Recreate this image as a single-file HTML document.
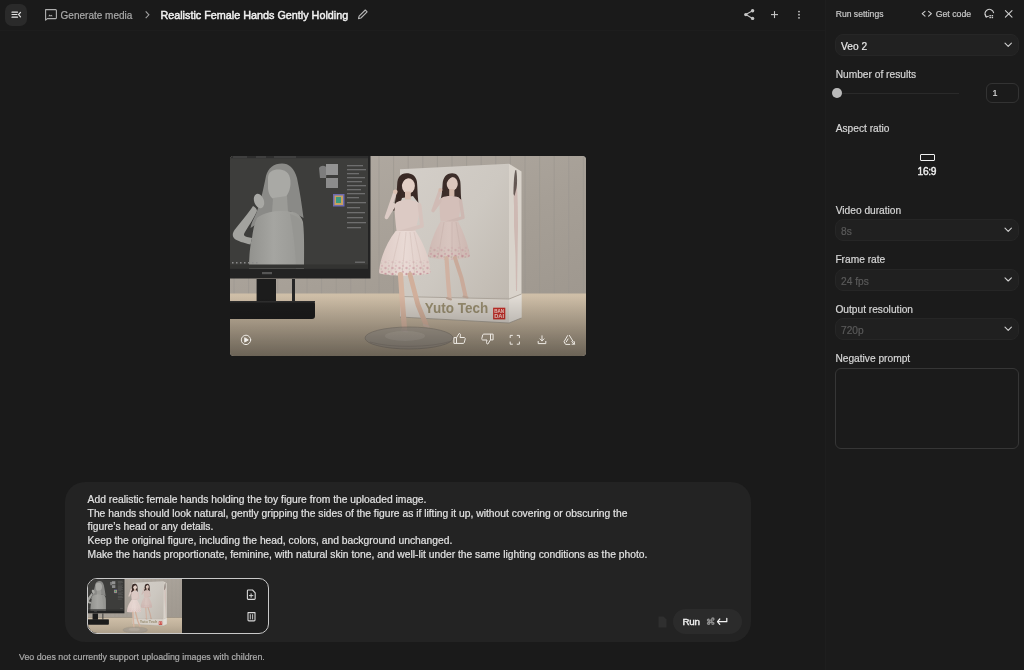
<!DOCTYPE html>
<html><head><meta charset="utf-8">
<style>
*{box-sizing:border-box;margin:0;padding:0}
html,body{width:1024px;height:670px;overflow:hidden;background:#1a1a1a;-webkit-font-smoothing:antialiased;font-family:"Liberation Sans",sans-serif;color:#e3e3e3}
.abs{position:absolute}
.t{position:absolute;white-space:pre;line-height:1}
#root{position:absolute;left:0;top:0;width:1024px;height:670px;will-change:transform;-webkit-text-stroke:0.2px currentColor}
svg{position:absolute;overflow:visible}
#panel{position:absolute;left:825px;top:0;width:199px;height:670px;background:#1b1b1b;border-left:1px solid #1e1e1e}
#hdrline{position:absolute;left:0;top:30px;width:825px;height:1px;background:#1d1d1d}
.lbl{font-size:10.2px;color:#d6d6d6}
.dd{position:absolute;left:835px;width:184px;height:22px;border-radius:8px;background:#202020;border:1px solid #262626}
.dd .v{position:absolute;left:5px;top:6px;font-size:10.2px;color:#5a5a5a;white-space:pre}
</style></head><body><div id="root">

<div id="hdrline"></div>
<!-- header left -->
<div class="abs" style="left:5px;top:4px;width:22px;height:22px;border-radius:7px;background:#2a2a2a"></div>
<svg style="left:0;top:0" width="40" height="30">
  <g stroke="#e6e6e6" stroke-width="1.2" fill="none" stroke-linecap="round">
    <line x1="12" y1="12.2" x2="17.5" y2="12.2"/>
    <line x1="12" y1="14.5" x2="17" y2="14.5"/>
    <line x1="12" y1="17.2" x2="17.5" y2="17.2"/>
    <polyline points="20.5,12.4 18.6,14.6 20.5,16.8"/>
  </g>
</svg>
<svg style="left:0;top:0" width="60" height="30">
  <path d="M45.6,9.6 h10 a0.8,0.8 0 0 1 0.8,0.8 v7.4 a0.8,0.8 0 0 1 -0.8,0.8 h-8.2 l-1.8,1.6 z" fill="none" stroke="#b0b0b0" stroke-width="1.1" stroke-linejoin="round"/>
  <path d="M48.3,16.2 l1.3,-1.6 l0.9,1 l0.8,-0.9 l1.5,1.5 z" fill="#b0b0b0"/>
</svg>
<div class="t" style="left:60.6px;top:11px;font-size:10px;color:#a9a9a9">Generate media</div>
<svg style="left:0;top:0" width="160" height="30">
  <polyline points="145.7,11.4 148.9,14.8 145.7,18.2" fill="none" stroke="#a0a0a0" stroke-width="1.1"/>
</svg>
<div class="t" style="left:160.4px;top:9.6px;font-size:10.8px;font-weight:400;-webkit-text-stroke:0.45px #f2f2f2;color:#f2f2f2">Realistic Female Hands Gently Holding</div>
<svg style="left:0;top:0" width="380" height="30">
  <path d="M358.5,18.6 l0.6,-2.4 l6.2,-6.2 l1.8,1.8 l-6.2,6.2 z" fill="none" stroke="#b5b5b5" stroke-width="1.1" stroke-linejoin="round"/>
</svg>
<!-- header right icons -->
<svg style="left:0;top:0" width="820" height="30">
  <g fill="#c6c6c6">
    <circle cx="745.8" cy="14.6" r="1.7"/><circle cx="752.6" cy="10.8" r="1.7"/><circle cx="752.6" cy="18.4" r="1.7"/>
  </g>
  <g stroke="#c6c6c6" stroke-width="1.1" fill="none">
    <line x1="745.8" y1="14.6" x2="752.6" y2="10.8"/><line x1="745.8" y1="14.6" x2="752.6" y2="18.4"/>
    <line x1="771" y1="14.6" x2="778" y2="14.6"/><line x1="774.5" y1="11.1" x2="774.5" y2="18.1"/>
  </g>
  <g fill="#c6c6c6">
    <circle cx="799" cy="11.6" r="0.9"/><circle cx="799" cy="14.7" r="0.9"/><circle cx="799" cy="17.8" r="0.9"/>
  </g>
</svg>

<!-- video player -->
<div id="video" class="abs" style="left:230px;top:156px;width:356px;height:200px;border-radius:4px;overflow:hidden;background:#b4afa9">
<svg style="left:0;top:0" width="356" height="200" viewBox="0 0 356 200">
<defs>
  <linearGradient id="wall" x1="0" y1="0" x2="1" y2="1"><stop offset="0" stop-color="#b3aca4"/><stop offset="0.6" stop-color="#a69f96"/><stop offset="1" stop-color="#9f988f"/></linearGradient>
  <linearGradient id="floor" x1="0" y1="0" x2="0" y2="1"><stop offset="0" stop-color="#cfbfa8"/><stop offset="0.45" stop-color="#c0b19b"/><stop offset="1" stop-color="#a89b87"/></linearGradient>
  <linearGradient id="ov" x1="0" y1="0" x2="0" y2="1"><stop offset="0" stop-color="#000" stop-opacity="0"/><stop offset="1" stop-color="#000" stop-opacity="0.36"/></linearGradient>
  <linearGradient id="boxf" x1="0" y1="0" x2="1" y2="1"><stop offset="0" stop-color="#d4cfc9"/><stop offset="0.5" stop-color="#cdc8c1"/><stop offset="1" stop-color="#bdb6ad"/></linearGradient>
  <linearGradient id="skirt" x1="0" y1="0" x2="1" y2="0"><stop offset="0" stop-color="#dcc9c3"/><stop offset="0.5" stop-color="#e9dad5"/><stop offset="1" stop-color="#dccac4"/></linearGradient>
  <linearGradient id="skirt2" x1="0" y1="0" x2="1" y2="0"><stop offset="0" stop-color="#cdb8b2"/><stop offset="0.5" stop-color="#d8c5bf"/><stop offset="1" stop-color="#cbb5af"/></linearGradient>
  <linearGradient id="torso" x1="0" y1="0" x2="1" y2="0"><stop offset="0" stop-color="#92928e"/><stop offset="0.45" stop-color="#a5a5a1"/><stop offset="1" stop-color="#979793"/></linearGradient>
  <radialGradient id="disc" cx="0.5" cy="0.5" r="0.5"><stop offset="0" stop-color="#aaa399"/><stop offset="0.85" stop-color="#a19a90"/><stop offset="1" stop-color="#8e877e"/></radialGradient>
</defs>
<g id="scene">
<rect x="0" y="0" width="356" height="138" fill="url(#wall)"/>
<g stroke="#9a958f" stroke-width="1" opacity="0.6">
<line x1="149.0" y1="0" x2="149.0" y2="138"/>
<line x1="163.6" y1="0" x2="163.6" y2="138"/>
<line x1="178.2" y1="0" x2="178.2" y2="138"/>
<line x1="192.8" y1="0" x2="192.8" y2="138"/>
<line x1="207.4" y1="0" x2="207.4" y2="138"/>
<line x1="222.0" y1="0" x2="222.0" y2="138"/>
<line x1="236.6" y1="0" x2="236.6" y2="138"/>
<line x1="251.2" y1="0" x2="251.2" y2="138"/>
<line x1="265.8" y1="0" x2="265.8" y2="138"/>
<line x1="280.4" y1="0" x2="280.4" y2="138"/>
<line x1="295.0" y1="0" x2="295.0" y2="138"/>
<line x1="309.6" y1="0" x2="309.6" y2="138"/>
<line x1="324.2" y1="0" x2="324.2" y2="138"/>
<line x1="338.8" y1="0" x2="338.8" y2="138"/>
<line x1="353.4" y1="0" x2="353.4" y2="138"/>
<line x1="4.0" y1="122" x2="4.0" y2="138"/>
<line x1="18.6" y1="122" x2="18.6" y2="138"/>
<line x1="33.2" y1="122" x2="33.2" y2="138"/>
<line x1="47.8" y1="122" x2="47.8" y2="138"/>
<line x1="62.4" y1="122" x2="62.4" y2="138"/>
<line x1="77.0" y1="122" x2="77.0" y2="138"/>
<line x1="91.6" y1="122" x2="91.6" y2="138"/>
<line x1="106.2" y1="122" x2="106.2" y2="138"/>
<line x1="120.8" y1="122" x2="120.8" y2="138"/>
<line x1="135.4" y1="122" x2="135.4" y2="138"/>
</g>
<rect x="0" y="137.5" width="356" height="62.5" fill="url(#floor)"/>
<!-- monitor -->
<rect x="-2" y="-2" width="142.5" height="124.5" fill="#232323"/>
<rect x="0" y="0" width="138" height="112.5" fill="#3d3d3b"/>
<rect x="0" y="0" width="138" height="2.2" fill="#2e2e2e"/>
<g fill="#5a5a5a"><rect x="3" y="0.6" width="14" height="0.8"/><rect x="26" y="0.6" width="10" height="0.8"/><rect x="44" y="0.6" width="22" height="0.8"/></g>
<!-- sculpture -->
<path d="M52,7.5 C44,7.5 38,12 36,20 C34,30 31,45 26,58 C23,64 21,68 20.5,72 L30,66 L44,56 L60,55 L70,60 L73.5,62 C72,50 70,36 67,22 C64,12 59,7.5 52,7.5 Z" fill="#8a8a87"/>
<path d="M38,22 C38,15 44,13 50,13.5 C57,14 61,19 60.5,28 C60,36 56,44 49,44.5 C42,45 37.5,38 38,30 Z" fill="#a9a9a5"/>
<path d="M43,42 L57,40 L58,56 L42,57 Z" fill="#9b9b97"/>
<path d="M27,62 C34,56 46,54.5 57,55 C66,55.5 71,59 73,66 C74.5,80 74,95 74,112.5 L19,112.5 C19,100 20,90 22,82 C23,74 24.5,67 27,62 Z" fill="url(#torso)"/>
<path d="M60,58 C68,60 72,64 73,72 L74,112.5 L66,112.5 C66,100 64,80 60,58 Z" fill="#959591" opacity="0.8"/>
<path d="M20.5,88.5 C14,87 7,85 4.3,82.5 C2,80 2.5,77 4.5,74 C10,67 16,60 21,53 L23,50 C25,51 27,53 27,55 C25,60 20,68 15,76 C13,79 14,80 17,81 L22,82 Z" fill="#a2a29e"/>
<ellipse cx="29" cy="45" rx="4.8" ry="7.5" transform="rotate(-20 29 45)" fill="#a8a8a4"/>
<rect x="0" y="108.5" width="138" height="4" fill="#333331"/>
<!-- zbrush ui -->
<g>
  <path d="M89,12 c2,-3 6,-3 8,0 l-1,10 h-6 z" fill="#7d7d7d"/>
  <rect x="96" y="8" width="12" height="11" fill="#939393"/>
  <rect x="96" y="22" width="12" height="10" fill="#8c8c8c"/>
  <rect x="103" y="38" width="11.5" height="12.5" fill="#6d6ab0"/>
  <rect x="104.5" y="39.5" width="8.5" height="9.5" fill="#c8a060"/>
  <rect x="106" y="41" width="5" height="6" fill="#3a9a80"/>
  <g fill="#6e6e6e">
    <rect x="117" y="9" width="16" height="1.3"/><rect x="117" y="13" width="19" height="1.3"/><rect x="117" y="17" width="12" height="1.3"/>
    <rect x="117" y="21" width="18" height="1.3"/><rect x="117" y="25" width="15" height="1.3"/><rect x="117" y="29" width="19" height="1.3"/>
    <rect x="117" y="33" width="14" height="1.3"/><rect x="117" y="37" width="18" height="1.3"/><rect x="117" y="41" width="12" height="1.3"/>
    <rect x="117" y="46" width="19" height="1.3"/><rect x="117" y="51" width="13" height="1.3"/><rect x="117" y="56" width="18" height="1.3"/>
    <rect x="117" y="61" width="16" height="1.3"/><rect x="117" y="66" width="19" height="1.3"/><rect x="117" y="71" width="14" height="1.3"/>
  </g>
  <g fill="#8a8a8a"><rect x="2" y="106" width="1.5" height="1.5"/><rect x="6" y="106" width="1.5" height="1.5"/><rect x="10" y="106" width="1.5" height="1.5"/><rect x="14" y="106" width="1.5" height="1.5"/><rect x="18" y="106" width="1.5" height="1.5"/><rect x="22" y="106" width="1.5" height="1.5"/><rect x="26" y="106" width="1.5" height="1.5"/></g>
  <rect x="125" y="105.5" width="10" height="1.5" fill="#666"/>
  <rect x="32" y="116" width="10" height="2.2" fill="#555"/>
</g>
<!-- stand -->
<rect x="26.6" y="123" width="19.4" height="23" fill="#1c1c1c"/>
<rect x="62" y="123" width="3" height="22" fill="#262626"/>
<path d="M-1,145 L82,145 C84,145 85,146 85,148 L85,160 C85,162 84,163 82,163 L-1,163 Z" fill="#1b1b1b"/>
<rect x="0" y="145" width="85" height="1.6" fill="#2e2e2e"/>
<!-- box -->
<path d="M170,13.3 L279,7.8 L279,167 L170,161 Z" fill="url(#boxf)"/>
<path d="M279,7.8 L291.5,15.4 L291.5,162 L279,167 Z" fill="#d9d3cb"/>
<path d="M170,140.5 L279,143 L279,167 L170,161 Z" fill="#d6d0c8"/>
<path d="M279,143 L291.5,138 L291.5,162 L279,167 Z" fill="#e2ddd6"/>
<path d="M170,140.5 L279,143 L291.5,138" fill="none" stroke="#a9a197" stroke-width="0.9"/>
<path d="M170,161 L279,167 L291.5,162" fill="none" stroke="#9d958a" stroke-width="0.8"/>
<text x="194.8" y="156.6" font-family="Liberation Sans" font-weight="700" font-size="15.2" fill="#968b6e" textLength="63.4" lengthAdjust="spacingAndGlyphs">Yuto Tech</text>
<rect x="263.1" y="151.7" width="12.2" height="11.7" fill="#c22d27"/>
<text x="264.2" y="156.8" font-family="Liberation Sans" font-weight="700" font-size="5" fill="#f3d0c8" textLength="10" lengthAdjust="spacingAndGlyphs">BAN</text>
<text x="264.2" y="161.8" font-family="Liberation Sans" font-weight="700" font-size="5" fill="#f3d0c8" textLength="10" lengthAdjust="spacingAndGlyphs">DAI</text>
<!-- box side figure -->
<path d="M284.5,26 C283.5,32 283.5,40 284,50 L284,70 L285.5,100 L286,135 L287,135 L287.5,100 L288,70 C288,50 287.5,35 286.5,26 Z" fill="#c9aea8" opacity="0.7"/>
<path d="M285.5,14 C284,18 283.5,28 283.5,38 L284.5,40 L286.5,32 C287.5,26 287,18 286.2,14 Z" fill="#4a3e3a" opacity="0.8"/>
<!-- figure 2 -->
<defs>
  <clipPath id="sk2"><path d="M210.5,65.6 L228,65.6 C233,75 238,88 239.6,98 C239.8,100 239.5,101 238.5,101.5 C226,104 210,104 199.3,101.5 C198.3,101 198,100 198.2,98 C200,88 205,75 210.5,65.6 Z"/></clipPath>
  <clipPath id="sk1"><path d="M165.7,75 L185.5,75 C193,86 199,100 200.2,113 C200.8,115 200.5,117 199.8,117.5 C186,120.5 162,120.5 149.6,117.5 C149,117 149,115 149.4,113 C151,100 157,86 165.7,75 Z"/></clipPath>
  <pattern id="flor" width="7" height="6" patternUnits="userSpaceOnUse">
    <circle cx="1.5" cy="4" r="1.2" fill="#bb7f8a" opacity="0.85"/><circle cx="5" cy="1.8" r="1.1" fill="#c48f98" opacity="0.8"/><circle cx="4.2" cy="5" r="0.7" fill="#8f9a80" opacity="0.6"/>
  </pattern>
  <linearGradient id="band" x1="0" y1="0" x2="0" y2="1"><stop offset="0" stop-color="#fff" stop-opacity="0.15"/><stop offset="1" stop-color="#fff" stop-opacity="1"/></linearGradient>
  <mask id="bandm1"><rect x="140" y="104" width="70" height="18" fill="url(#band)"/></mask>
  <mask id="bandm2"><rect x="190" y="90" width="60" height="14" fill="url(#band)"/></mask>
</defs>
<g>
  <path d="M222.2,17.3 C216,17.3 213,22 212.6,28 C212.3,35 211.5,42 209.5,48 L213.5,48 L216,42 L228,41 L231.5,45 C230.5,38 231,30 230.2,25 C228.8,20 226.5,17.3 222.2,17.3 Z" fill="#3d2e2a"/>
  <ellipse cx="222.2" cy="27.8" rx="5.6" ry="6.8" fill="#dcc7bd"/>
  <path d="M216,23 C217.5,19.5 222,18.5 225.5,20.5 C222,20.5 218.5,22.5 216.8,27 Z" fill="#3d2e2a"/>
  <rect x="219.2" y="33" width="5.2" height="7.5" fill="#d2b8aa"/>
  <path d="M214.5,26 C213.8,34 213,42 211.5,48 L214.5,47 C215.5,40 216,33 216.5,26 Z" fill="#3a2c28"/>
  <path d="M209.5,46 C209.5,42 213,40 220.5,40 C227.5,40 231,42 231,46 C230.5,53 229.5,59 228,65.6 L210.5,65.6 C209.8,59 209.5,53 209.5,46 Z" fill="#d4bfb9"/>
  <path d="M210,45 L203,54.7 L210.2,34.5" fill="none" stroke="#d0bbb5" stroke-width="3.4" stroke-linecap="round" stroke-linejoin="round"/>
  <circle cx="210.4" cy="34" r="2" fill="#d3b8aa"/>
  <path d="M230.5,45 L233,61.5 L215.5,67" fill="none" stroke="#cdb8b2" stroke-width="3.4" stroke-linecap="round" stroke-linejoin="round"/>
  <g clip-path="url(#sk2)">
    <rect x="195" y="64" width="48" height="42" fill="url(#skirt2)"/>
    <path d="M214,66 L208,102 M222,66 L222,103 M226,66 L232,102" stroke="#c2aba5" stroke-width="0.7" opacity="0.6"/>
    <rect x="190" y="90" width="60" height="14" fill="url(#flor)" mask="url(#bandm2)"/>
  </g>
  <path d="M216.5,102 L218,124 L219.5,142" fill="none" stroke="#d0b2a2" stroke-width="4.2" stroke-linecap="round"/>
  <path d="M225,102 L231.5,122 L235.5,140" fill="none" stroke="#c9aa9a" stroke-width="4" stroke-linecap="round"/>
  <path d="M217,142 l4,1.5 M233.5,140.5 l4,1" stroke="#b8a092" stroke-width="2" stroke-linecap="round"/>
</g>
<!-- figure 1 -->
<g>
  <path d="M176.5,17.3 C170.5,17.3 167.5,21.5 167.2,28 C167,36 165.5,45 163,54.5 L168,54.5 L172,42 L183,40 L186,44 L188.5,47 C187.5,40 187.6,30 186.8,25 C185.5,19.5 181.5,17.3 176.5,17.3 Z" fill="#3a2a26"/>
  <ellipse cx="178.4" cy="29.8" rx="6.5" ry="7.6" fill="#e3cfc5"/>
  <path d="M171.5,24 C173,20 178,19 182,21 C178,21 174,23 172,28 Z" fill="#3a2a26"/>
  <rect x="175" y="35.5" width="5.8" height="8" fill="#d9bdaf"/>
  <path d="M169.5,26 C168.5,36 167.5,46 165,55 L168,54 C169.5,46 170.5,36 171.5,26 Z" fill="#372723"/>
  <path d="M164.5,51 C164.5,46 169,44 177,44 C185,44 190,46 190,51 C189.5,58 187.5,66 185.5,75 L166.5,75 C165.5,66 164.6,58 164.5,51 Z" fill="#dccac4"/>
  <path d="M164,49 L156.5,61.3 L165,36.5" fill="none" stroke="#dccbc5" stroke-width="3.8" stroke-linecap="round" stroke-linejoin="round"/>
  <circle cx="165.3" cy="35.8" r="2.3" fill="#dcc1b3"/>
  <path d="M189.5,49 L192,70 L169,76.5" fill="none" stroke="#d6c3bd" stroke-width="3.8" stroke-linecap="round" stroke-linejoin="round"/>
  <g clip-path="url(#sk1)">
    <rect x="146" y="73" width="58" height="50" fill="url(#skirt)"/>
    <path d="M170,76 L160,119 M176,76 L172,120 M180,76 L185,120 M184,76 L194,119" stroke="#d3bfb9" stroke-width="0.8" opacity="0.7"/>
    <rect x="140" y="104" width="70" height="18" fill="url(#flor)" mask="url(#bandm1)"/>
  </g>
  <path d="M170.5,118.5 L172.5,148 L174.5,173" fill="none" stroke="#d6b5a1" stroke-width="5.2" stroke-linecap="round"/>
  <path d="M180,118.5 L188,149 L196,168.5" fill="none" stroke="#d1af9b" stroke-width="4.8" stroke-linecap="round"/>
  <path d="M172,174 l5,1.5 M194,169 l4.5,1.5" stroke="#c9b2a4" stroke-width="2.2" stroke-linecap="round"/>
</g>
<ellipse cx="179" cy="182" rx="44" ry="11" fill="#9f988f" opacity="0.7" stroke="#7d766e" stroke-width="0.8"/>
<ellipse cx="175" cy="180" rx="20" ry="5" fill="#c6beb3" opacity="0.35"/>
<path d="M140,186 C160,192 200,192 222,185" fill="none" stroke="#8a8279" stroke-width="0.8" opacity="0.7"/>
</g>
<!-- overlay -->
<rect x="0" y="140" width="356" height="60" fill="url(#ov)"/>
<g stroke="#eeeae4" stroke-width="1" fill="none" stroke-linejoin="round" stroke-linecap="round">
  <circle cx="16" cy="183.9" r="4.7"/>
  <path d="M15,181.9 L18.3,183.9 L15,185.9 Z" fill="#f4f4f4"/>
  <path d="M224.3,181.6 h2.2 v5.8 h-2.2 z M226.6,181.6 l2.5,-4.1 c1.1,0 1.6,0.8 1.4,1.7 l-0.5,2.3 h4.1 c0.8,0 1.3,0.7 1.1,1.4 l-0.9,3.6 c-0.2,0.55 -0.6,0.9 -1.1,0.9 h-6.6"/>
  <path d="M262.7,183.9 h-2.2 v-5.8 h2.2 z M260.4,183.9 l-2.5,4.1 c-1.1,0 -1.6,-0.8 -1.4,-1.7 l0.5,-2.3 h-4.1 c-0.8,0 -1.3,-0.7 -1.1,-1.4 l0.9,-3.6 c0.2,-0.55 0.6,-0.9 1.1,-0.9 h6.6"/>
  <path d="M280.2,181.6 v-2.2 h2.2 M287.2,179.4 h2.2 v2.2 M289.4,186 v2.2 h-2.2 M282.4,188.2 h-2.2 v-2.2"/>
  <path d="M312,179.8 v5 M310,182.9 l2,2 l2,-2 M308.2,185.4 v2.2 h7.6 v-2.2"/>
  <path d="M337.6,179.6 l-3.6,6.2 l1.6,2.6 h4.2 M339.4,179.4 l3.8,6.2 M336.2,186 l1.8,-3"/>
  <path d="M341.8,185.6 l2.6,2.6 M344.4,185.8 v2.4 h-2.4"/>
</g>
</svg>
</div>

<!-- prompt box -->
<div class="abs" style="left:65px;top:482px;width:686px;height:160px;border-radius:20px;background:#232323"></div>
<div class="abs" style="left:87.6px;top:492.9px;font-size:10.3px;line-height:13.65px;color:#e2e2e2;white-space:pre">Add realistic female hands holding the toy figure from the uploaded image.
The hands should look natural, gently gripping the sides of the figure as if lifting it up, without covering or obscuring the
figure’s head or any details.
Keep the original figure, including the head, colors, and background unchanged.
Make the hands proportionate, feminine, with natural skin tone, and well-lit under the same lighting conditions as the photo.</div>

<!-- attachment chip -->
<div class="abs" style="left:87px;top:578px;width:182px;height:56px;border-radius:10px;border:1.5px solid #c9c9c9;background:#1e1e1e;overflow:hidden">
  <svg style="left:0;top:0;overflow:hidden" width="93.5" height="56" viewBox="0 0 93.5 56"><use href="#scene" transform="translate(-2.9,0) scale(0.28)"/></svg>
</div>

<svg style="left:0;top:0" width="300" height="660">
  <g stroke="#d8d8d8" stroke-width="1.1" fill="none" stroke-linejoin="round" stroke-linecap="round">
    <path d="M248.2,590 h4.3 l2.7,2.8 v5.8 a0.8,0.8 0 0 1 -0.8,0.8 h-6.2 a0.8,0.8 0 0 1 -0.8,-0.8 v-7.8 a0.8,0.8 0 0 1 0.8,-0.8 z"/>
    <path d="M251.1,593.8 v3.6 M249.3,595.6 h3.6" stroke-width="1"/>
    <path d="M248,612.6 h7 v7.4 a0.9,0.9 0 0 1 -0.9,0.9 h-5.2 a0.9,0.9 0 0 1 -0.9,-0.9 z"/>
    <path d="M250.3,614.6 v4.4 M252.6,614.6 v4.4" stroke-width="0.9"/>
  </g>
  <g fill="#2f2f2f"><path d="M658.5,616.5 h5 l3,3 v8 h-8 z"/></g>
</svg>
<!-- run button -->
<div class="abs" style="left:673px;top:609px;width:69px;height:25px;border-radius:13px;background:#2b2b2b"></div>
<div class="t" style="left:682.4px;top:617px;font-size:9.8px;font-weight:400;letter-spacing:-0.2px;-webkit-text-stroke:0.4px #f0f0f0;color:#f0f0f0">Run</div>
<svg style="left:0;top:0" width="740" height="640">
  <g stroke="#8e8e8e" stroke-width="1.35" fill="none">
    <path d="M709.6,620.1 h2.2 v2.2 h-2.2 z M709.6,620.1 a1.05,1.05 0 1 1 -1.05,-1.05 v1.05 M711.8,620.1 v-1.05 a1.05,1.05 0 1 1 1.05,1.05 M711.8,622.3 h1.05 a1.05,1.05 0 1 1 -1.05,1.05 M709.6,622.3 v1.05 a1.05,1.05 0 1 1 -1.05,-1.05 h1.05"/>
  </g>
  <g stroke="#f2f2f2" stroke-width="1.2" fill="none" stroke-linecap="round" stroke-linejoin="round">
    <path d="M726.8,618.3 v3.4 h-9"/><polyline points="719.8,619 717.5,621.7 719.8,624.3"/>
  </g>
</svg>

<!-- footer -->
<div class="t" style="left:19px;top:653px;font-size:8.85px;color:#ababab">Veo does not currently support uploading images with children.</div>

<!-- right panel -->
<div id="panel"></div>
<div class="t" style="left:835.7px;top:9.5px;font-size:8.6px;color:#c8c8c8">Run settings</div>
<div class="t" style="left:935.7px;top:9.5px;font-size:8.75px;color:#c8c8c8">Get code</div>

<div class="dd" style="top:34px;background:#212121"><div class="v" style="color:#e8e8e8;top:5.5px">Veo 2</div></div>
<div class="t lbl" style="left:835.7px;top:70px">Number of results</div>
<div class="abs" style="left:842px;top:92.5px;width:117px;height:1px;background:#2a2a2a"></div>
<div class="abs" style="left:832.3px;top:88.1px;width:9.8px;height:9.8px;border-radius:50%;background:#b9b9b9"></div>
<div class="abs" style="left:986px;top:83px;width:33px;height:20px;border-radius:6px;border:1px solid #333"></div>
<div class="t" style="left:992.5px;top:89px;font-size:9px;color:#d8d8d8">1</div>

<div class="t lbl" style="left:835.7px;top:123.5px">Aspect ratio</div>
<div class="abs" style="left:920px;top:153.5px;width:14.5px;height:7.5px;border:1.6px solid #f0f0f0;border-radius:1px"></div>
<div class="t" style="left:917.6px;top:167px;font-size:10.2px;font-weight:400;letter-spacing:-0.3px;-webkit-text-stroke:0.4px #f0f0f0;color:#f0f0f0">16:9</div>

<div class="t lbl" style="left:835.7px;top:206px">Video duration</div>
<div class="dd" style="top:219px"><div class="v">8s</div></div>
<div class="t lbl" style="left:835.4px;top:254.5px">Frame rate</div>
<div class="dd" style="top:269px"><div class="v">24 fps</div></div>
<div class="t lbl" style="left:835.4px;top:304.5px">Output resolution</div>
<div class="dd" style="top:318px"><div class="v">720p</div></div>
<div class="t lbl" style="left:835.4px;top:353.5px">Negative prompt</div>
<div class="abs" style="left:835px;top:368px;width:184px;height:81px;border-radius:6px;border:1px solid #363636"></div>

<svg style="left:0;top:0" width="1024" height="460">
  <g stroke="#cfcfcf" stroke-width="1.1" fill="none" stroke-linecap="round" stroke-linejoin="round">
    <polyline points="925,11.3 922.2,13.7 925,16.1"/>
    <polyline points="928.6,11.3 931.4,13.7 928.6,16.1"/>
    <path d="M986.2,16.8 A4.4,4.4 0 1 1 993.6,12.6"/>
    <polyline points="985.3,14.6 986.2,17 988.4,16.2"/>
    <line x1="1005.4" y1="10.6" x2="1012" y2="17.1"/><line x1="1012" y1="10.6" x2="1005.4" y2="17.1"/>
  </g>
  <g fill="#cfcfcf"><rect x="989.4" y="15" width="1.5" height="1.3"/><rect x="991.6" y="15" width="1.5" height="1.3"/><rect x="989.4" y="16.9" width="1.5" height="1.3"/><rect x="991.6" y="16.9" width="1.5" height="1.3"/></g>
  <g stroke="#d0d0d0" stroke-width="1.1" fill="none" stroke-linecap="round" stroke-linejoin="round">
    <polyline points="1005,43.2 1008.2,46.4 1011.4,43.2"/>
    <polyline points="1005,228.2 1008.2,231.4 1011.4,228.2"/>
    <polyline points="1005,277.8 1008.2,281 1011.4,277.8"/>
    <polyline points="1005,327.2 1008.2,330.4 1011.4,327.2"/>
  </g>
</svg>
</div></body></html>
